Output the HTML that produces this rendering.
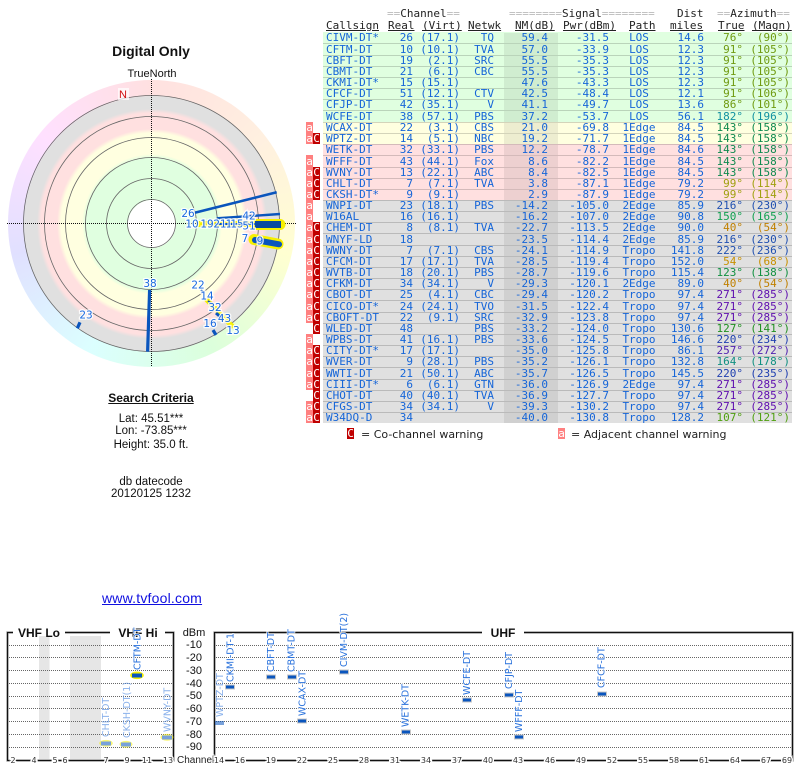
<!DOCTYPE html>
<html>
<head>
<meta charset="utf-8">
<style>
html,body{margin:0;padding:0;background:#fff;width:800px;height:768px;overflow:hidden}
body{position:relative;font-family:"Liberation Sans",sans-serif;color:#111}
.abs{position:absolute;white-space:nowrap}
.ctr{position:absolute;left:51px;width:200px;text-align:center;white-space:nowrap;font-size:11.5px;line-height:14px}
#wheel{position:absolute;left:8px;top:80px;width:287px;height:287px;border-radius:50%;
background:conic-gradient(hsl(0,100%,94%),hsl(30,100%,94%),hsl(60,100%,91%),hsl(120,100%,93%),hsl(180,100%,93%),hsl(240,100%,94%),hsl(300,100%,94%),hsl(360,100%,94%))}
#disc{position:absolute;left:23.5px;top:95.5px;width:256px;height:256px;border-radius:50%;
background:radial-gradient(circle 128px at center,#fff 0 24px,#e0ffe0 24px 66px,#ffffe0 70px 91px,#ffe0e0 95px 111px,#e0e0e0 115px 128px)}
svg{position:absolute;left:0;top:0}
.hd{position:absolute;font:11px/12px "DejaVu Sans Mono",monospace;white-space:pre;color:#222}
.hd i{font-style:normal;color:#bbb}
.u{text-decoration:underline}
table{position:absolute;left:306px;top:32px;width:486px;table-layout:fixed;border-collapse:separate;border-spacing:0;font:11px/10px "DejaVu Sans Mono",monospace;color:#1565d8}
td{height:11px;padding:0;box-sizing:border-box;white-space:nowrap;border-top:1px solid rgba(0,0,0,.17);text-align:right;overflow:visible;vertical-align:top}
tr:first-child td{border-top-color:transparent}
td:nth-child(1),td:nth-child(2),td:nth-child(3){border-top-color:transparent;text-align:center;color:#fff}
tr.j td{height:12px;padding-top:1px}
td.a{background:#ff8080}
td.c{background:#c00000}
tr.g td:nth-child(n+4){background:#e0ffe0}
tr.y td:nth-child(n+4){background:#ffffe0}
tr.p td:nth-child(n+4){background:#ffe0e0}
tr.z td:nth-child(n+4){background:#e0e0e0}
td:nth-child(4){text-align:left;padding-left:3px}
td:nth-child(7){padding-right:10px}
td:nth-child(8){padding-right:10px;box-shadow:inset 0 0 0 99px rgba(0,0,0,.07)}
td:nth-child(10){text-align:center}
td:nth-child(12),td:nth-child(13){color:var(--c)}
td:nth-child(13){padding-right:2px}
.box{position:absolute;top:428px;width:7px;height:11px;color:#fff;font:11px/11px "DejaVu Sans Mono",monospace;text-align:center}
.leg{position:absolute;top:428px;font:11px/14px "DejaVu Sans",sans-serif;color:#222;white-space:pre}
text{white-space:pre}
.rl{font:10.5px "DejaVu Sans",sans-serif;fill:#1a6ae0;stroke:#fff;stroke-width:2.5;stroke-opacity:.85;paint-order:stroke;text-anchor:middle;dominant-baseline:central}
.vl{font:9.5px "DejaVu Sans",sans-serif;fill:#2a72dc;stroke:#fff;stroke-width:1.5;stroke-opacity:.8;paint-order:stroke}
.fd{opacity:.55}
.tk{font:8px "DejaVu Sans",sans-serif;fill:#333;stroke:#fff;stroke-width:3;paint-order:stroke;text-anchor:middle}
.db{font:11px "Liberation Sans",sans-serif;fill:#111;text-anchor:middle}
.bh{font:bold 12px "Liberation Sans",sans-serif;fill:#111;text-anchor:middle}
</style>
</head>
<body>
<div id="wheel"></div>
<div id="disc"></div>
<svg width="800" height="768" viewBox="0 0 800 768">
<g fill="none" stroke="#666" stroke-width=".8">
<circle cx="151.5" cy="223.5" r="24"/><circle cx="151.5" cy="223.5" r="45"/><circle cx="151.5" cy="223.5" r="66"/><circle cx="151.5" cy="223.5" r="86"/><circle cx="151.5" cy="223.5" r="107"/><circle cx="151.5" cy="223.5" r="128"/>
</g>
<g stroke="#111" stroke-width="1" stroke-dasharray="1 1">
<line x1="151.5" y1="79" x2="151.5" y2="367"/><line x1="7" y1="223.5" x2="296" y2="223.5"/>
</g>
<rect x="118" y="88" width="11" height="12" fill="#fff" opacity=".7"/>
<text x="123" y="98" font-family="Liberation Sans" font-size="11" fill="#d01010" text-anchor="middle">N</text>
<!-- yellow halos -->
<g fill="none" stroke="#f6f000" stroke-linecap="round">
<line x1="199" y1="224" x2="255" y2="224" stroke-width="6"/>
<line x1="255" y1="224.5" x2="280" y2="224.5" stroke-width="11"/>
<line x1="254" y1="239.5" x2="278" y2="244" stroke-width="11"/>
<line x1="207" y1="300" x2="232" y2="326" stroke-width="5"/>
</g>
<!-- blue signal lines -->
<g fill="none" stroke="#0a55bd">
<line x1="194.7" y1="212.7" x2="276.7" y2="192.3" stroke-width="2.6"/>
<line x1="216.7" y1="218.3" x2="280" y2="214" stroke-width="2.4"/>
<line x1="215" y1="224" x2="255" y2="224" stroke-width="2"/>
<line x1="255" y1="224.5" x2="281" y2="224.5" stroke-width="7" stroke="#0a4aa0"/>
<line x1="255" y1="240" x2="279" y2="244.3" stroke-width="6" stroke-linecap="round"/>
<line x1="149.6" y1="290" x2="147.6" y2="351.7" stroke-width="3.2"/>
<line x1="80" y1="322.3" x2="77.3" y2="328.3" stroke-width="3.2"/>
<line x1="213" y1="330" x2="216" y2="335" stroke-width="3.2"/>
<line x1="216" y1="313" x2="221.7" y2="318" stroke-width="3"/>
<line x1="201" y1="290" x2="203" y2="292" stroke-width="2"/>
<line x1="208" y1="301" x2="212" y2="304" stroke-width="2"/>
</g>
<g class="rlg">
<text class="rl" x="188" y="214">26</text>
<text class="rl" x="249" y="216.5">42</text>
<text class="rl" x="192" y="224.5">10</text>
<text class="rl" x="207" y="224.5">19</text>
<text class="rl" x="220" y="224.5">21</text>
<text class="rl" x="229" y="224.5">1</text>
<text class="rl" x="237" y="224.5">15</text>
<text class="rl" x="249" y="226.5">51</text>
<text class="rl" x="245" y="239">7</text>
<text class="rl" x="260" y="241.5">9</text>
<text class="rl" x="150" y="284">38</text>
<text class="rl" x="86" y="315.5">23</text>
<text class="rl" x="198" y="285.5">22</text>
<text class="rl" x="207" y="296.5">14</text>
<text class="rl" x="215" y="308">32</text>
<text class="rl" x="224.5" y="319">43</text>
<text class="rl" x="233" y="331">13</text>
<text class="rl" x="210" y="324">16</text>
</g>

<!-- chart: grey bands -->
<rect x="39" y="636" width="10.5" height="123" fill="#e6e6e6"/>
<rect x="70" y="636" width="31" height="123" fill="#e6e6e6"/>
<!-- grid -->
<g stroke="#666" stroke-width="1" stroke-dasharray="1 1">
<path d="M9 645.5H173M9 657.5H173M9 670.5H173M9 683.5H173M9 696.5H173M9 708.5H173M9 721.5H173M9 734.5H173M9 747.5H173"/>
<path d="M216 645.5H791M216 657.5H791M216 670.5H791M216 683.5H791M216 696.5H791M216 708.5H791M216 721.5H791M216 734.5H791M216 747.5H791"/>
</g>
<!-- frames -->
<g fill="none" stroke="#bbb" stroke-width="2.6">
<path d="M13 632.5H7.500V760.5H173.500V632.5H165M65 632.5H110"/>
<path d="M482 632.5H214.500V760.500H792.500V632.500H524"/>
</g>
<g fill="none" stroke="#111" stroke-width="1.2">
<path d="M13 632.5H7.500V760.5H173.500V632.5H165M65 632.5H110"/>
<path d="M482 632.5H214.500V760.500H792.500V632.500H524"/>
</g>
<text class="bh" x="39" y="637" font-size="12">VHF Lo</text>
<text class="bh" x="138" y="637">VHF Hi</text>
<text class="bh" x="503" y="637">UHF</text>
<text class="db" x="194" y="636">dBm</text>
<text class="db" x="194" y="648">-10</text>
<text class="db" x="194" y="661">-20</text>
<text class="db" x="194" y="674">-30</text>
<text class="db" x="194" y="687">-40</text>
<text class="db" x="194" y="699">-50</text>
<text class="db" x="194" y="712">-60</text>
<text class="db" x="194" y="725">-70</text>
<text class="db" x="194" y="738">-80</text>
<text class="db" x="194" y="750">-90</text>
<text x="177" y="763" font-family="Liberation Sans" font-size="10" fill="#222" stroke="#fff" stroke-width="2" paint-order="stroke">Channel</text>
<!-- ticks -->
<g>
<text class="tk" x="13" y="763">2</text><text class="tk" x="34" y="763">4</text><text class="tk" x="55" y="763">5</text><text class="tk" x="65" y="763">6</text><text class="tk" x="106" y="763">7</text><text class="tk" x="127" y="763">9</text><text class="tk" x="147" y="763">11</text><text class="tk" x="168" y="763">13</text>
<text class="tk" x="219" y="763">14</text><text class="tk" x="240" y="763">16</text><text class="tk" x="271" y="763">19</text><text class="tk" x="302" y="763">22</text><text class="tk" x="333" y="763">25</text><text class="tk" x="364" y="763">28</text><text class="tk" x="395" y="763">31</text><text class="tk" x="426" y="763">34</text><text class="tk" x="457" y="763">37</text><text class="tk" x="488" y="763">40</text><text class="tk" x="518" y="763">43</text><text class="tk" x="550" y="763">46</text><text class="tk" x="581" y="763">49</text><text class="tk" x="612" y="763">52</text><text class="tk" x="643" y="763">55</text><text class="tk" x="674" y="763">58</text><text class="tk" x="704" y="763">61</text><text class="tk" x="735" y="763">64</text><text class="tk" x="766" y="763">67</text><text class="tk" x="787" y="763">69</text>
</g>
<!-- markers VHF -->
<text class="vl" transform="translate(140.5,670) rotate(-90)">CFTM-DT</text>
<ellipse cx="137" cy="675.3" rx="6.8" ry="3.8" fill="#f6f000"/>
<rect x="132" y="673.5" width="10" height="4" fill="#0a55bd"/>
<g class="fd">
<text class="vl" transform="translate(109,737) rotate(-90)">CHLT-DT</text>
<ellipse cx="106" cy="743.3" rx="6.8" ry="3.4" fill="#f6f000"/><rect x="101" y="741.5" width="10" height="4" fill="#0a55bd"/>
<text class="vl" transform="translate(130,738) rotate(-90)">CKSH-DT(1)</text>
<ellipse cx="126" cy="744.3" rx="6.5" ry="3.4" fill="#f6f000"/><rect x="121" y="742.5" width="10" height="4" fill="#0a55bd"/>
<text class="vl" transform="translate(170.5,732) rotate(-90)">WVNY-DT</text>
<ellipse cx="167" cy="737.3" rx="6.5" ry="3.4" fill="#f6f000"/><rect x="162" y="735.5" width="10" height="4" fill="#0a55bd"/>
<text class="vl" transform="translate(223,717) rotate(-90)">WPTZ-DT</text>
<rect x="215" y="721" width="9" height="4" fill="#0a55bd"/>
</g>
<!-- labels UHF -->
<text class="vl" transform="translate(233.5,682) rotate(-90)">CKMI-DT-1</text>
<text class="vl" transform="translate(274,672) rotate(-90)">CBFT-DT</text>
<text class="vl" transform="translate(294.5,672) rotate(-90)">CBMT-DT</text>
<text class="vl" transform="translate(305.5,716) rotate(-90)">WCAX-DT</text>
<text class="vl" transform="translate(347,667) rotate(-90)">CIVM-DT(2)</text>
<text class="vl" transform="translate(408.5,727) rotate(-90)">WETK-DT</text>
<text class="vl" transform="translate(470,695) rotate(-90)">WCFE-DT</text>
<text class="vl" transform="translate(512,689) rotate(-90)">CFJP-DT</text>
<text class="vl" transform="translate(522,732) rotate(-90)">WFFF-DT</text>
<text class="vl" transform="translate(604.5,688) rotate(-90)">CFCF-DT</text>
<!-- markers UHF -->
<g fill="#0a55bd" stroke="#c8c8c8" stroke-width="1">
<rect x="225.5" y="685" width="9" height="4"/>
<rect x="266.5" y="675" width="9" height="4"/>
<rect x="287.5" y="675" width="9" height="4"/>
<rect x="297.5" y="719" width="9" height="4"/>
<rect x="339.5" y="670" width="9" height="4"/>
<rect x="401.5" y="730" width="9" height="4"/>
<rect x="462.5" y="698" width="9" height="4"/>
<rect x="504.5" y="693" width="9" height="4"/>
<rect x="514.5" y="735" width="9" height="4"/>
<rect x="597.5" y="692" width="9" height="4"/>
</g>
</svg>

<div class="abs" style="left:51px;width:200px;top:43px;text-align:center;font-weight:bold;font-size:14px;line-height:17px">Digital Only</div>
<div class="abs" style="left:52px;width:200px;top:68px;text-align:center;font-size:11px;line-height:13px">TrueNorth</div>
<div class="ctr" style="top:391px;font-weight:bold;font-size:12px;text-decoration:underline">Search Criteria</div>
<div class="ctr" style="top:412px">Lat: 45.51***</div>
<div class="ctr" style="top:424px">Lon: -73.85***</div>
<div class="ctr" style="top:438px">Height: 35.0 ft.</div>
<div class="ctr" style="top:475px">db datecode</div>
<div class="ctr" style="top:487px">20120125 1232</div>
<div class="abs" style="left:102px;top:590px;font-size:14px;line-height:16px;letter-spacing:.2px;color:#1010e0;text-decoration:underline">www.tvfool.com</div>

<!-- table headers -->
<div class="hd" style="left:387px;top:8px"><i>==</i>Channel<i>==</i></div>
<div class="hd" style="left:509px;top:8px"><i>========</i>Signal<i>========</i></div>
<div class="hd" style="left:677px;top:8px">Dist</div>
<div class="hd" style="left:717px;top:8px"><i>==</i>Azimuth<i>==</i></div>
<div class="hd u" style="left:326px;top:20px">Callsign</div>
<div class="hd u" style="left:388px;top:20px">Real</div>
<div class="hd u" style="left:422px;top:20px">(Virt)</div>
<div class="hd u" style="left:468px;top:20px">Netwk</div>
<div class="hd u" style="left:515px;top:20px">NM(dB)</div>
<div class="hd u" style="left:563px;top:20px">Pwr(dBm)</div>
<div class="hd u" style="left:629px;top:20px">Path</div>
<div class="hd u" style="left:670px;top:20px">miles</div>
<div class="hd u" style="left:718px;top:20px">True</div>
<div class="hd u" style="left:752px;top:20px">(Magn)</div>

<table>
<colgroup><col style="width:7px"><col style="width:7px"><col style="width:3px"><col style="width:62px"><col style="width:28px"><col style="width:47px"><col style="width:44px"><col style="width:54px"><col style="width:51px"><col style="width:60px"><col style="width:35px"><col style="width:39px"><col style="width:49px"></colgroup>
<tr class="g" style="--c:#6f9a10"><td></td><td></td><td></td><td>CIVM-DT*</td><td>26</td><td>(17.1)</td><td>TQ</td><td>59.4</td><td>-31.5</td><td>LOS</td><td>14.6</td><td>76°</td><td>(90°)</td></tr>
<tr class="g j" style="--c:#6f9a10"><td></td><td></td><td></td><td>CFTM-DT</td><td>10</td><td>(10.1)</td><td>TVA</td><td>57.0</td><td>-33.9</td><td>LOS</td><td>12.3</td><td>91°</td><td>(105°)</td></tr>
<tr class="g" style="--c:#6f9a10"><td></td><td></td><td></td><td>CBFT-DT</td><td>19</td><td>(2.1)</td><td>SRC</td><td>55.5</td><td>-35.3</td><td>LOS</td><td>12.3</td><td>91°</td><td>(105°)</td></tr>
<tr class="g" style="--c:#6f9a10"><td></td><td></td><td></td><td>CBMT-DT</td><td>21</td><td>(6.1)</td><td>CBC</td><td>55.5</td><td>-35.3</td><td>LOS</td><td>12.3</td><td>91°</td><td>(105°)</td></tr>
<tr class="g" style="--c:#6f9a10"><td></td><td></td><td></td><td>CKMI-DT*</td><td>15</td><td>(15.1)</td><td></td><td>47.6</td><td>-43.3</td><td>LOS</td><td>12.3</td><td>91°</td><td>(105°)</td></tr>
<tr class="g" style="--c:#6f9a10"><td></td><td></td><td></td><td>CFCF-DT</td><td>51</td><td>(12.1)</td><td>CTV</td><td>42.5</td><td>-48.4</td><td>LOS</td><td>12.1</td><td>91°</td><td>(106°)</td></tr>
<tr class="g" style="--c:#6f9a10"><td></td><td></td><td></td><td>CFJP-DT</td><td>42</td><td>(35.1)</td><td>V</td><td>41.1</td><td>-49.7</td><td>LOS</td><td>13.6</td><td>86°</td><td>(101°)</td></tr>
<tr class="g j" style="--c:#1090a0"><td></td><td></td><td></td><td>WCFE-DT</td><td>38</td><td>(57.1)</td><td>PBS</td><td>37.2</td><td>-53.7</td><td>LOS</td><td>56.1</td><td>182°</td><td>(196°)</td></tr>
<tr class="y" style="--c:#108a50"><td class="a">a</td><td></td><td></td><td>WCAX-DT</td><td>22</td><td>(3.1)</td><td>CBS</td><td>21.0</td><td>-69.8</td><td>1Edge</td><td>84.5</td><td>143°</td><td>(158°)</td></tr>
<tr class="y" style="--c:#108a50"><td class="a">a</td><td class="c">C</td><td></td><td>WPTZ-DT</td><td>14</td><td>(5.1)</td><td>NBC</td><td>19.2</td><td>-71.7</td><td>1Edge</td><td>84.5</td><td>143°</td><td>(158°)</td></tr>
<tr class="p" style="--c:#108a50"><td></td><td></td><td></td><td>WETK-DT</td><td>32</td><td>(33.1)</td><td>PBS</td><td>12.2</td><td>-78.7</td><td>1Edge</td><td>84.6</td><td>143°</td><td>(158°)</td></tr>
<tr class="p j" style="--c:#108a50"><td class="a">a</td><td></td><td></td><td>WFFF-DT</td><td>43</td><td>(44.1)</td><td>Fox</td><td>8.6</td><td>-82.2</td><td>1Edge</td><td>84.5</td><td>143°</td><td>(158°)</td></tr>
<tr class="p" style="--c:#108a50"><td class="a">a</td><td class="c">C</td><td></td><td>WVNY-DT</td><td>13</td><td>(22.1)</td><td>ABC</td><td>8.4</td><td>-82.5</td><td>1Edge</td><td>84.5</td><td>143°</td><td>(158°)</td></tr>
<tr class="p" style="--c:#a0a010"><td class="a">a</td><td class="c">C</td><td></td><td>CHLT-DT</td><td>7</td><td>(7.1)</td><td>TVA</td><td>3.8</td><td>-87.1</td><td>1Edge</td><td>79.2</td><td>99°</td><td>(114°)</td></tr>
<tr class="p" style="--c:#a0a010"><td class="a">a</td><td class="c">C</td><td></td><td>CKSH-DT*</td><td>9</td><td>(9.1)</td><td></td><td>2.9</td><td>-87.9</td><td>1Edge</td><td>79.2</td><td>99°</td><td>(114°)</td></tr>
<tr class="z" style="--c:#2050b0"><td class="a">a</td><td></td><td></td><td>WNPI-DT</td><td>23</td><td>(18.1)</td><td>PBS</td><td>-14.2</td><td>-105.0</td><td>2Edge</td><td>85.9</td><td>216°</td><td>(230°)</td></tr>
<tr class="z" style="--c:#10a050"><td class="a">a</td><td></td><td></td><td>W16AL</td><td>16</td><td>(16.1)</td><td></td><td>-16.2</td><td>-107.0</td><td>2Edge</td><td>90.8</td><td>150°</td><td>(165°)</td></tr>
<tr class="z" style="--c:#c08000"><td class="a">a</td><td class="c">C</td><td></td><td>CHEM-DT</td><td>8</td><td>(8.1)</td><td>TVA</td><td>-22.7</td><td>-113.5</td><td>2Edge</td><td>90.0</td><td>40°</td><td>(54°)</td></tr>
<tr class="z j" style="--c:#2050b0"><td class="a">a</td><td class="c">C</td><td></td><td>WNYF-LD</td><td>18</td><td></td><td></td><td>-23.5</td><td>-114.4</td><td>2Edge</td><td>85.9</td><td>216°</td><td>(230°)</td></tr>
<tr class="z" style="--c:#2050b0"><td class="a">a</td><td class="c">C</td><td></td><td>WWNY-DT</td><td>7</td><td>(7.1)</td><td>CBS</td><td>-24.1</td><td>-114.9</td><td>Tropo</td><td>141.8</td><td>222°</td><td>(236°)</td></tr>
<tr class="z" style="--c:#c89000"><td class="a">a</td><td class="c">C</td><td></td><td>CFCM-DT</td><td>17</td><td>(17.1)</td><td>TVA</td><td>-28.5</td><td>-119.4</td><td>Tropo</td><td>152.0</td><td>54°</td><td>(68°)</td></tr>
<tr class="z" style="--c:#109040"><td class="a">a</td><td class="c">C</td><td></td><td>WVTB-DT</td><td>18</td><td>(20.1)</td><td>PBS</td><td>-28.7</td><td>-119.6</td><td>Tropo</td><td>115.4</td><td>123°</td><td>(138°)</td></tr>
<tr class="z" style="--c:#c08000"><td class="a">a</td><td class="c">C</td><td></td><td>CFKM-DT</td><td>34</td><td>(34.1)</td><td>V</td><td>-29.3</td><td>-120.1</td><td>2Edge</td><td>89.0</td><td>40°</td><td>(54°)</td></tr>
<tr class="z" style="--c:#6010b0"><td class="a">a</td><td class="c">C</td><td></td><td>CBOT-DT</td><td>25</td><td>(4.1)</td><td>CBC</td><td>-29.4</td><td>-120.2</td><td>Tropo</td><td>97.4</td><td>271°</td><td>(285°)</td></tr>
<tr class="z j" style="--c:#6010b0"><td class="a">a</td><td class="c">C</td><td></td><td>CICO-DT*</td><td>24</td><td>(24.1)</td><td>TVO</td><td>-31.5</td><td>-122.4</td><td>Tropo</td><td>97.4</td><td>271°</td><td>(285°)</td></tr>
<tr class="z" style="--c:#6010b0"><td class="a">a</td><td class="c">C</td><td></td><td>CBOFT-DT</td><td>22</td><td>(9.1)</td><td>SRC</td><td>-32.9</td><td>-123.8</td><td>Tropo</td><td>97.4</td><td>271°</td><td>(285°)</td></tr>
<tr class="z" style="--c:#209020"><td></td><td class="c">C</td><td></td><td>WLED-DT</td><td>48</td><td></td><td>PBS</td><td>-33.2</td><td>-124.0</td><td>Tropo</td><td>130.6</td><td>127°</td><td>(141°)</td></tr>
<tr class="z" style="--c:#2040b0"><td class="a">a</td><td></td><td></td><td>WPBS-DT</td><td>41</td><td>(16.1)</td><td>PBS</td><td>-33.6</td><td>-124.5</td><td>Tropo</td><td>146.6</td><td>220°</td><td>(234°)</td></tr>
<tr class="z" style="--c:#5020b0"><td class="a">a</td><td class="c">C</td><td></td><td>CITY-DT*</td><td>17</td><td>(17.1)</td><td></td><td>-35.0</td><td>-125.8</td><td>Tropo</td><td>86.1</td><td>257°</td><td>(272°)</td></tr>
<tr class="z" style="--c:#109080"><td class="a">a</td><td class="c">C</td><td></td><td>WVER-DT</td><td>9</td><td>(28.1)</td><td>PBS</td><td>-35.2</td><td>-126.1</td><td>Tropo</td><td>132.8</td><td>164°</td><td>(178°)</td></tr>
<tr class="z j" style="--c:#2040b0"><td class="a">a</td><td class="c">C</td><td></td><td>WWTI-DT</td><td>21</td><td>(50.1)</td><td>ABC</td><td>-35.7</td><td>-126.5</td><td>Tropo</td><td>145.5</td><td>220°</td><td>(235°)</td></tr>
<tr class="z" style="--c:#6010b0"><td class="a">a</td><td class="c">C</td><td></td><td>CIII-DT*</td><td>6</td><td>(6.1)</td><td>GTN</td><td>-36.0</td><td>-126.9</td><td>2Edge</td><td>97.4</td><td>271°</td><td>(285°)</td></tr>
<tr class="z" style="--c:#6010b0"><td></td><td class="c">C</td><td></td><td>CHOT-DT</td><td>40</td><td>(40.1)</td><td>TVA</td><td>-36.9</td><td>-127.7</td><td>Tropo</td><td>97.4</td><td>271°</td><td>(285°)</td></tr>
<tr class="z" style="--c:#6010b0"><td class="a">a</td><td class="c">C</td><td></td><td>CFGS-DT</td><td>34</td><td>(34.1)</td><td>V</td><td>-39.3</td><td>-130.2</td><td>Tropo</td><td>97.4</td><td>271°</td><td>(285°)</td></tr>
<tr class="z" style="--c:#50a010"><td class="a">a</td><td class="c">C</td><td></td><td>W34DQ-D</td><td>34</td><td></td><td></td><td>-40.0</td><td>-130.8</td><td>Tropo</td><td>128.2</td><td>107°</td><td>(121°)</td></tr>
</table>

<div class="box" style="left:347px;background:#c00000">C</div>
<div class="leg" style="left:361px">= Co-channel warning</div>
<div class="box" style="left:558px;background:#ff8080">a</div>
<div class="leg" style="left:571px">= Adjacent channel warning</div>
</body>
</html>
